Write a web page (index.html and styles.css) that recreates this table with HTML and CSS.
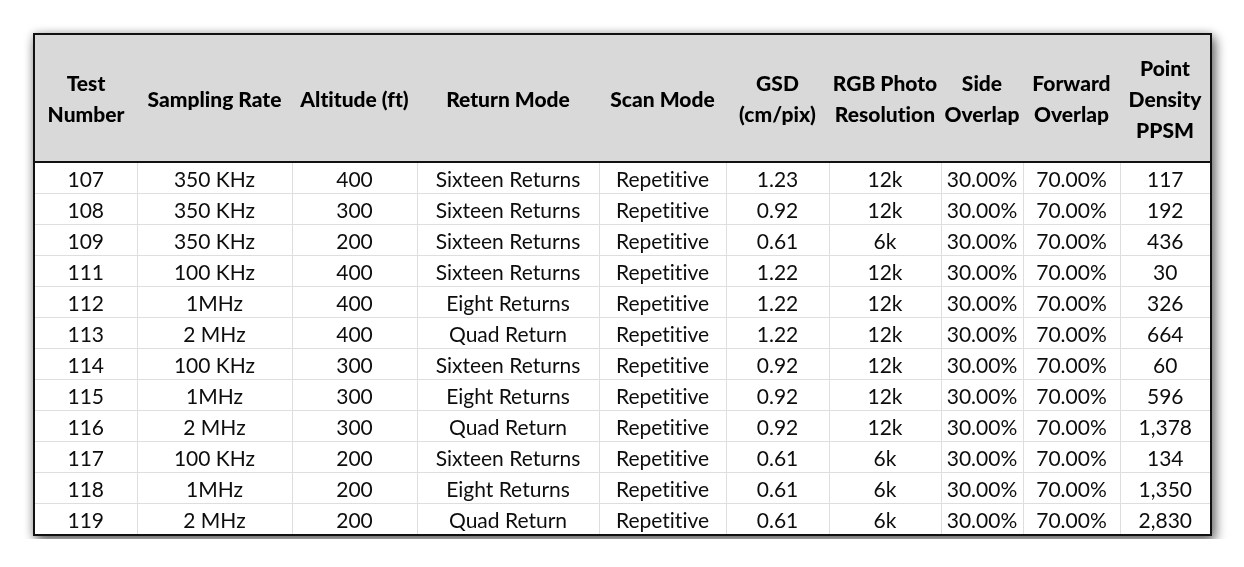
FILE: index.html
```html
<!DOCTYPE html>
<html>
<head>
<meta charset="utf-8">
<link rel="stylesheet" href="styles.css">
</head>
<body>
<div class="frame">
<table class="grid">
<colgroup>
<col class="c1"><col class="c2"><col class="c3"><col class="c4"><col class="c5"><col class="c6"><col class="c7"><col class="c8"><col class="c9"><col class="c10">
</colgroup>
<thead>
<tr>
<th>Test<br>Number</th>
<th>Sampling Rate</th>
<th>Altitude (ft)</th>
<th>Return Mode</th>
<th>Scan Mode</th>
<th>GSD<br>(cm/pix)</th>
<th>RGB Photo<br>Resolution</th>
<th>Side<br>Overlap</th>
<th>Forward<br>Overlap</th>
<th>Point<br>Density<br>PPSM</th>
</tr>
</thead>
<tbody>
<tr><td>107</td><td>350 KHz</td><td>400</td><td>Sixteen Returns</td><td>Repetitive</td><td>1.23</td><td>12k</td><td>30.00%</td><td>70.00%</td><td>117</td></tr>
<tr><td>108</td><td>350 KHz</td><td>300</td><td>Sixteen Returns</td><td>Repetitive</td><td>0.92</td><td>12k</td><td>30.00%</td><td>70.00%</td><td>192</td></tr>
<tr><td>109</td><td>350 KHz</td><td>200</td><td>Sixteen Returns</td><td>Repetitive</td><td>0.61</td><td>6k</td><td>30.00%</td><td>70.00%</td><td>436</td></tr>
<tr><td>111</td><td>100 KHz</td><td>400</td><td>Sixteen Returns</td><td>Repetitive</td><td>1.22</td><td>12k</td><td>30.00%</td><td>70.00%</td><td>30</td></tr>
<tr><td>112</td><td>1MHz</td><td>400</td><td>Eight Returns</td><td>Repetitive</td><td>1.22</td><td>12k</td><td>30.00%</td><td>70.00%</td><td>326</td></tr>
<tr><td>113</td><td>2 MHz</td><td>400</td><td>Quad Return</td><td>Repetitive</td><td>1.22</td><td>12k</td><td>30.00%</td><td>70.00%</td><td>664</td></tr>
<tr><td>114</td><td>100 KHz</td><td>300</td><td>Sixteen Returns</td><td>Repetitive</td><td>0.92</td><td>12k</td><td>30.00%</td><td>70.00%</td><td>60</td></tr>
<tr><td>115</td><td>1MHz</td><td>300</td><td>Eight Returns</td><td>Repetitive</td><td>0.92</td><td>12k</td><td>30.00%</td><td>70.00%</td><td>596</td></tr>
<tr><td>116</td><td>2 MHz</td><td>300</td><td>Quad Return</td><td>Repetitive</td><td>0.92</td><td>12k</td><td>30.00%</td><td>70.00%</td><td>1,378</td></tr>
<tr><td>117</td><td>100 KHz</td><td>200</td><td>Sixteen Returns</td><td>Repetitive</td><td>0.61</td><td>6k</td><td>30.00%</td><td>70.00%</td><td>134</td></tr>
<tr><td>118</td><td>1MHz</td><td>200</td><td>Eight Returns</td><td>Repetitive</td><td>0.61</td><td>6k</td><td>30.00%</td><td>70.00%</td><td>1,350</td></tr>
<tr><td>119</td><td>2 MHz</td><td>200</td><td>Quad Return</td><td>Repetitive</td><td>0.61</td><td>6k</td><td>30.00%</td><td>70.00%</td><td>2,830</td></tr>
</tbody>
</table>
</div>
</body>
</html>
```
FILE: styles.css
```css
html, body {
  margin: 0;
  padding: 0;
  background: #ffffff;
}
body {
  padding: 33px 0 0 33px;
  font-family: Lato, "Open Sans", sans-serif;
  font-variant-ligatures: none;
  font-feature-settings: "liga" 0, "clig" 0, "dlig" 0;
  color: #141414;
}
.frame {
  display: inline-block;
  width: 1177px;
  filter: drop-shadow(3px 5px 6px rgba(0, 0, 0, 0.55)) drop-shadow(0 0 4px rgba(0, 0, 0, 0.2));
}
.grid {
  width: 1177px;
  table-layout: fixed;
  border-collapse: collapse;
  border: 2px solid #111;
  background: #fff;
}
.c1 { width: 103px; }
.c2 { width: 155px; }
.c3 { width: 125px; }
.c4 { width: 182px; }
.c5 { width: 127px; }
.c6 { width: 103px; }
.c7 { width: 112px; }
.c8 { width: 82px; }
.c9 { width: 97px; }
.c10 { width: 91px; }
.grid th {
  background: #d9d9d9;
  font-weight: 900;
  font-size: 21px;
  line-height: 31px;
  color: #000;
  height: 126px;
  padding: 0;
  text-align: center;
  vertical-align: middle;
  border-bottom: 2px solid #111;
  border-top: 2px solid #111;
  white-space: nowrap;
}
.grid td {
  font-size: 21px;
  height: 28px;
  line-height: 28px;
  padding: 2px 0 0;
  text-align: center;
  border: 1px solid #dedede;
  white-space: nowrap;
  color: #0d0d0d;
}
```
